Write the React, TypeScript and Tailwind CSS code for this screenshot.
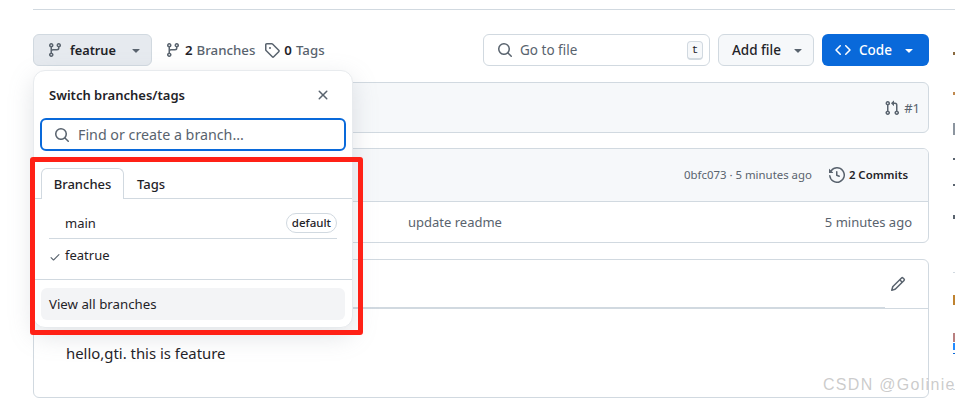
const branchPath = "M9.5 3.25a2.25 2.25 0 1 1 3 2.122V6A2.5 2.5 0 0 1 10 8.5H6a1 1 0 0 0-1 1v1.128a2.251 2.251 0 1 1-1.5 0V5.372a2.25 2.25 0 1 1 1.5 0v1.836A2.493 2.493 0 0 1 6 7h4a1 1 0 0 0 1-1v-.628A2.25 2.25 0 0 1 9.5 3.25Zm-6 0a.75.75 0 1 0 1.5 0 .75.75 0 0 0-1.5 0Zm8.25-.75a.75.75 0 1 0 0 1.5.75.75 0 0 0 0-1.5ZM4.25 12a.75.75 0 1 0 0 1.5.75.75 0 0 0 0-1.5Z";
const tagPath = "M1 7.775V2.75C1 1.784 1.784 1 2.75 1h5.025c.464 0 .91.184 1.238.513l6.25 6.25a1.75 1.75 0 0 1 0 2.474l-5.026 5.026a1.75 1.75 0 0 1-2.474 0l-6.25-6.25A1.752 1.752 0 0 1 1 7.775Zm1.5 0c0 .066.026.13.073.177l6.25 6.25a.25.25 0 0 0 .354 0l5.025-5.025a.25.25 0 0 0 0-.354l-6.25-6.25a.25.25 0 0 0-.177-.073H2.75a.25.25 0 0 0-.25.25ZM6 5a1 1 0 1 1 0 2 1 1 0 0 1 0-2Z";
const searchPath = "M10.68 11.74a6 6 0 0 1-7.922-8.982 6 6 0 0 1 8.982 7.922l3.04 3.04a.749.749 0 0 1-.326 1.275.749.749 0 0 1-.734-.215ZM11.5 7a4.499 4.499 0 1 0-8.997 0A4.499 4.499 0 0 0 11.5 7Z";
const xPath = "M3.72 3.72a.75.75 0 0 1 1.06 0L8 6.94l3.22-3.22a.749.749 0 0 1 1.275.326.749.749 0 0 1-.215.734L9.06 8l3.22 3.22a.749.749 0 0 1-.326 1.275.749.749 0 0 1-.734-.215L8 9.06l-3.22 3.22a.751.751 0 0 1-1.042-.018.751.751 0 0 1-.018-1.042L6.94 8 3.72 4.78a.75.75 0 0 1 0-1.06Z";
const codePath = "m11.28 3.22 4.25 4.25a.75.75 0 0 1 0 1.06l-4.25 4.25a.749.749 0 0 1-1.275-.326.749.749 0 0 1 .215-.734L13.94 8l-3.72-3.72a.749.749 0 0 1 .326-1.275.749.749 0 0 1 .734.215Zm-6.56 0a.751.751 0 0 1 1.042.018.751.751 0 0 1 .018 1.042L2.06 8l3.72 3.72a.749.749 0 0 1-.326 1.275.749.749 0 0 1-.734-.215L.47 8.53a.75.75 0 0 1 0-1.06Z";
const caretPath = "m4.427 7.427 3.396 3.396a.25.25 0 0 0 .354 0l3.396-3.396A.25.25 0 0 0 11.396 7H4.604a.25.25 0 0 0-.177.427Z";
const historyPath = "m.427 1.927 1.215 1.215a8.002 8.002 0 1 1-1.6 5.685.75.75 0 1 1 1.493-.154 6.5 6.5 0 1 0 1.18-4.458l1.358 1.358A.25.25 0 0 1 3.896 6H.25A.25.25 0 0 1 0 5.75V2.104a.25.25 0 0 1 .427-.177ZM7.75 4a.75.75 0 0 1 .75.75v2.992l2.028.812a.75.75 0 0 1-.557 1.392l-2.5-1A.751.751 0 0 1 7 8.25v-3.5A.75.75 0 0 1 7.75 4Z";
const pencilPath = "M11.013 1.427a1.75 1.75 0 0 1 2.474 0l1.086 1.086a1.75 1.75 0 0 1 0 2.474l-8.61 8.61c-.21.21-.47.364-.756.445l-3.251.93a.75.75 0 0 1-.927-.928l.929-3.25c.081-.286.235-.547.445-.758l8.61-8.61Zm.176 4.823L9.75 4.81l-6.286 6.287a.253.253 0 0 0-.064.108l-.558 1.953 1.953-.558a.253.253 0 0 0 .108-.064Zm1.238-3.763a.25.25 0 0 0-.354 0L10.811 3.75l1.439 1.44 1.263-1.263a.25.25 0 0 0 0-.354Z";
const prPath = "M1.5 3.25a2.25 2.25 0 1 1 3 2.122v5.256a2.251 2.251 0 1 1-1.5 0V5.372A2.25 2.25 0 0 1 1.5 3.25Zm5.677-.177L9.573.677A.25.25 0 0 1 10 .854V2.5h1A2.5 2.5 0 0 1 13.5 5v5.628a2.251 2.251 0 1 1-1.5 0V5a1 1 0 0 0-1-1h-1v1.646a.25.25 0 0 1-.427.177L7.177 3.427a.25.25 0 0 1 0-.354ZM3.75 2.5a.75.75 0 1 0 0 1.5.75.75 0 0 0 0-1.5Zm0 9.5a.75.75 0 1 0 0 1.5.75.75 0 0 0 0-1.5Zm8.25.75a.75.75 0 1 0 1.5 0 .75.75 0 0 0-1.5 0Z";
const checkPath = "M13.78 4.22a.75.75 0 0 1 0 1.06l-7.25 7.25a.75.75 0 0 1-1.06 0L2.22 9.28a.751.751 0 0 1 .018-1.042.751.751 0 0 1 1.042-.018L6 10.94l6.72-6.72a.75.75 0 0 1 1.06 0Z";

function Icon(props: { d: string; className: string }) {
  return (
    <svg viewBox="0 0 16 16" fill="currentColor" className={props.className}>
      <path d={props.d} />
    </svg>
  );
}

function Toolbar() {
  return (
    <div className="flex items-center h-8">
      <button className="flex items-center h-8 w-[119px] pl-[13px] rounded-md border border-[#d1d9e0] bg-[#e6eaef] text-[#1f2328]">
        <Icon d={branchPath} className="w-4 h-4 text-[#59636e]" />
        <span className="ml-[7px] font-semibold text-[12.75px]">featrue</span>
        <Icon d={caretPath} className="w-4 h-4 ml-[12px] text-[#59636e]" />
      </button>
      <div className="flex items-center ml-[13px] text-[#59636e] font-medium text-[13.25px]">
        <Icon d={branchPath} className="w-4 h-4" />
        <span className="ml-[4px] font-semibold text-[#1f2328]">2</span>
        <span className="ml-[4px]">Branches</span>
      </div>
      <div className="flex items-center ml-[9px] text-[#59636e] font-medium text-[13.25px]">
        <Icon d={tagPath} className="w-4 h-4" />
        <span className="ml-[4px] font-semibold text-[#1f2328]">0</span>
        <span className="ml-[4px]">Tags</span>
      </div>
      <div className="ml-auto flex items-center h-8 w-[227px] pl-[13px] pr-[6px] rounded-md border border-[#d1d9e0] bg-white text-[#59636e]">
        <Icon d={searchPath} className="w-4 h-4" />
        <span className="ml-[7px]">Go to file</span>
        <kbd className="ml-auto flex items-center justify-center w-4 h-[19px] rounded-[4px] border border-[#d1d9e0] border-b-2 bg-[#f6f8fa] text-[11px] text-[#1f2328] font-['Liberation_Mono',monospace]">
          t
        </kbd>
      </div>
      <button className="flex items-center h-8 w-[96px] ml-2 pl-[13px] rounded-md border border-[#d1d9e0] bg-[#f6f8fa] text-[#1f2328] font-medium">
        Add file
        <Icon d={caretPath} className="w-4 h-4 ml-[9px] text-[#59636e]" />
      </button>
      <button className="flex items-center h-8 w-[107px] ml-2 pl-[13px] rounded-md bg-[#0969da] text-white font-medium">
        <Icon d={codePath} className="w-4 h-4" />
        <span className="ml-[8px]">Code</span>
        <Icon d={caretPath} className="w-4 h-4 ml-[9px]" />
      </button>
    </div>
  );
}

function BranchMenu() {
  return (
    <div className="absolute left-0 top-[36px] w-[320px] h-[258px] rounded-xl bg-white border border-[#e8ebee] shadow-[0_8px_24px_rgba(140,149,159,0.25)] flex flex-col">
      <div className="flex items-center justify-between h-[47px] pl-[15px] pr-[21px] font-semibold text-[#1f2328]">
        <span className="text-[13px]">Switch branches/tags</span>
        <Icon d={xPath} className="w-4 h-4 text-[#59636e]" />
      </div>
      <div className="mx-[6px] flex items-center h-[33px] pl-[12px] rounded-md border-2 border-[#0969da] text-[#59636e]">
        <Icon d={searchPath} className="w-4 h-4" />
        <span className="ml-[8px] text-[14.25px]">Find or create a branch...</span>
      </div>
      <div className="mt-[17px] flex h-[31px] px-[7px] border-b border-[#d1d9e0]">
        <div className="w-[83px] h-[31px] flex items-center justify-center rounded-t-md border border-b-0 border-[#d1d9e0] bg-white font-medium text-[13px] text-[#1f2328]">
          Branches
        </div>
        <div className="ml-[13px] h-[31px] flex items-center font-medium text-[13px] text-[#1f2328]">Tags</div>
      </div>
      <div className="px-[15px] mt-[8px] text-[13px]">
        <div className="flex items-center justify-between h-[32px] pl-[16px] border-b border-[#d1d9e0] text-[#1f2328]">
          <span>main</span>
          <span className="flex items-center h-5 px-[5px] rounded-full border border-[#d1d9e0] text-[11.5px] font-medium">
            default
          </span>
        </div>
        <div className="flex items-center h-[32px] text-[#1f2328]">
          <Icon d={checkPath} className="w-[12px] h-[12px] mt-[3px] text-[#59636e]" />
          <span className="ml-[4px]">featrue</span>
        </div>
      </div>
      <div className="mt-[8px] border-t border-[#d1d9e0] px-[7px] pt-[8px]">
        <div className="flex items-center h-[32px] pl-[8px] rounded-md bg-[#f3f4f6] text-[13.25px] text-[#1f2328]">View all branches</div>
      </div>
    </div>
  );
}

function RepoFiles() {
  return (
    <div className="flex flex-col">
      <div className="mt-4 h-[51px] flex items-center justify-end pr-[8px] rounded-md border border-[#d1d9e0] bg-[#f6f8fa] text-[#59636e]">
        <Icon d={prPath} className="w-4 h-4" />
        <span className="ml-[4px] text-[13px]">#1</span>
      </div>
      <div className="mt-[15px] h-[95px] rounded-md border border-[#d1d9e0] flex flex-col overflow-hidden">
        <div className="h-[53px] shrink-0 flex items-center justify-end pr-[20px] bg-[#f6f8fa] border-b border-[#d1d9e0]">
          <span className="text-[11.4px] text-[#59636e]">0bfc073 · 5 minutes ago</span>
          <Icon d={historyPath} className="w-4 h-4 ml-[17px] text-[#59636e]" />
          <span className="ml-[4px] text-[11.4px] font-semibold text-[#1f2328]">2 Commits</span>
        </div>
        <div className="flex-1 flex items-center text-[#59636e]">
          <span className="ml-[374px] text-[13px]">update readme</span>
          <span className="ml-auto mr-[16px] text-[13px]">5 minutes ago</span>
        </div>
      </div>
      <div className="mt-[16px] h-[139px] rounded-md border border-[#d1d9e0] flex flex-col">
        <div className="h-[49px] shrink-0 border-b border-[#d1d9e0] relative flex items-center justify-end pr-[22px]">
          <Icon d={pencilPath} className="w-4 h-4 text-[#59636e]" />
          <div className="absolute left-0 bottom-0 w-[851px] h-px bg-[#d1d9e0]" />
        </div>
        <p className="pl-[32px] mt-[34px] text-[14.9px] text-[#1f2328]">hello,gti. this is feature</p>
      </div>
    </div>
  );
}

function AsideFragments() {
  return (
    <aside className="ml-[24px] w-[2px] shrink-0 flex flex-col">
      <div className="mt-[18px] h-[3px] bg-[#8a6a40]" />
      <div className="mt-[37px] h-[3px] bg-[#c08a50]" />
      <div className="mt-[28px] h-[12px] bg-[#8c959f]" />
      <div className="mt-[23px] h-[2px] bg-[#59636e]" />
      <div className="mt-[24px] h-[2px] bg-[#59636e]" />
      <div className="mt-[29px] h-[4px] bg-[#59636e]" />
      <div className="mt-[53px] h-px bg-[#d1d9e0]" />
      <div className="mt-[22px] h-[10px] bg-[#bf8330]" />
      <div className="mt-[28px] h-[9px] bg-[#b98080]" />
      <div className="mt-[1px] h-[7px] bg-[#218bff]" />
      <div className="mt-[3px] h-px bg-[#0969da]" />
      <div className="mt-[35px] h-px bg-[#d1d9e0]" />
    </aside>
  );
}

export default function App() {
  return (
    <div className="relative h-[403px] w-[955px] overflow-hidden bg-white font-['Noto_Sans','Liberation_Sans',sans-serif] text-[13.5px] leading-5">
      <div className="ml-[33px] mt-[9px] border-t border-[#d1d9e0] pt-[24px] flex">
        <div className="w-[896px] shrink-0">
          <div className="relative">
            <Toolbar />
            <RepoFiles />
            <BranchMenu />
          </div>
        </div>
        <AsideFragments />
      </div>
      {/* red annotation box from the screenshot */}
      <div className="absolute left-[30px] top-[157px] w-[333px] h-[178px] rounded-[3px] border-[5px] border-[#ff2116]" />
      <span className="absolute left-[823px] top-[375px] whitespace-nowrap text-[16px] tracking-[1.3px] text-[#b5b5b5]/70 font-['Liberation_Sans',sans-serif]">
        CSDN @Golinie
      </span>
    </div>
  );
}
